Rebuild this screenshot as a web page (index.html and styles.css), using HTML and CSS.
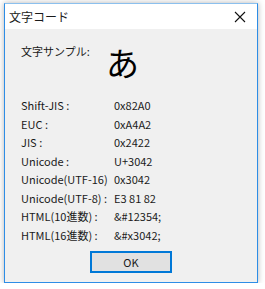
FILE: index.html
```html
<!DOCTYPE html>
<html lang="ja">
<head>
<meta charset="UTF-8">
<meta name="viewport" content="width=device-width, initial-scale=1.0">
<title>文字コード</title>
<link rel="stylesheet" href="styles.css">
</head>
<body>

<div class="window">
    <div class="titlebar">
        <span class="title">文字コード</span>
        <svg class="close" width="12" height="12" viewBox="0 0 12 12">
            <path d="M1 1 L11 11 M11 1 L1 11" stroke="#111" stroke-width="1.1" fill="none"/>
        </svg>
    </div>

    <div class="content">
        <div class="sample">
            <span class="sample-label">文字サンプル:</span>
            <span class="sample-char">あ</span>
        </div>

        <div class="codes">
            <span>Shift-JIS :</span><span>0x82A0</span>
            <span>EUC :</span><span>0xA4A2</span>
            <span>JIS :</span><span>0x2422</span>
            <span>Unicode :</span><span>U+3042</span>
            <span>Unicode(UTF-16)</span><span>0x3042</span>
            <span>Unicode(UTF-8) :</span><span>E3 81 82</span>
            <span>HTML(10進数) :</span><span>&amp;#12354;</span>
            <span>HTML(16進数) :</span><span>&amp;#x3042;</span>
        </div>

        <div class="btn-row">
            <button class="ok-btn">OK</button>
        </div>
    </div>
</div>

</body>
</html>
```

FILE: styles.css
```css
/* dialog */
body {
    margin: 0;
    background-color: #fff;
    font-family: "Noto Sans CJK JP", "Noto Sans", sans-serif;
    color: #1a1a1a;
}

.window {
    margin: 3px 0 0 4px;
    width: 252px;
    height: 278px;
    border: 1px solid #2d8de6;
    border-top-color: #8bc0ee;
    background-color: #f0f0f0;
    box-shadow: 0 0 6px rgba(0, 0, 0, 0.3);
    display: flex;
    flex-direction: column;
}

.titlebar {
    height: 25px;
    background-color: #fff;
    display: flex;
    align-items: center;
    justify-content: space-between;
    padding: 0 11px 0 4px;
}

.title {
    font-size: 12px;
}

.content {
    flex: 1;
    padding: 8px 0 0 16px;
    font-size: 11px;
}

.sample {
    display: flex;
    align-items: flex-start;
    height: 59px;
}

.sample-label {
    width: 85px;
    margin-top: 6px;
}

.sample-char {
    font-size: 33px;
    line-height: 40px;
    margin-top: 5px;
    color: #000;
}

.codes {
    display: grid;
    grid-template-columns: 93px auto;
    grid-auto-rows: 18.5px;
    align-items: center;
}

.btn-row {
    display: flex;
    justify-content: center;
    margin-top: 7px;
    padding-right: 16px;
}

.ok-btn {
    width: 82px;
    height: 22px;
    background-color: #e1e1e1;
    border: 2px solid #0078d7;
    font-family: inherit;
    font-size: 11px;
    color: #1a1a1a;
    padding: 0;
}
```
